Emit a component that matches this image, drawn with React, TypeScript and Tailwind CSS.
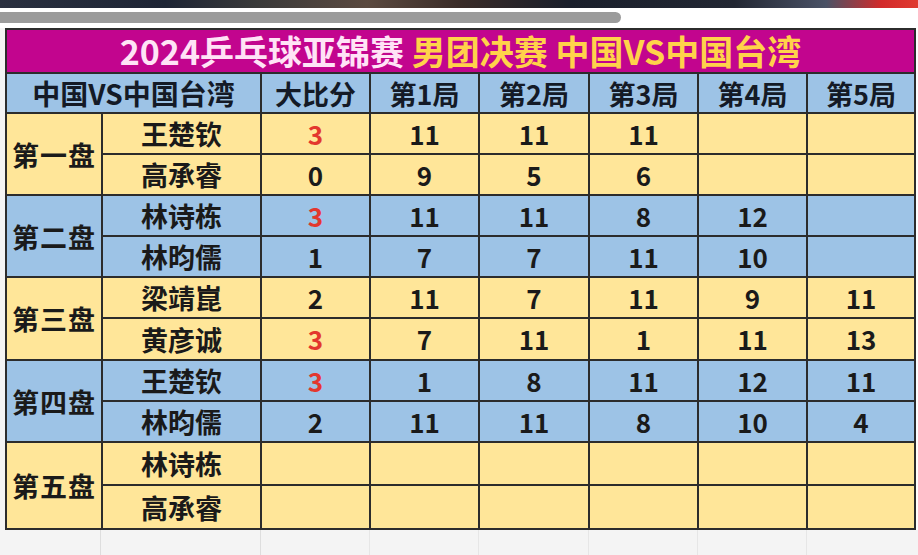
import React from "react";

type Row = { name: string; score: string; games: (number | "")[] };
type Group = { label: string; blue: boolean; rows: Row[] };

const groups: Group[] = [
  {
    label: "第一盘",
    blue: false,
    rows: [
      { name: "王楚钦", score: "3", games: [11, 11, 11, "", ""] },
      { name: "高承睿", score: "0", games: [9, 5, 6, "", ""] },
    ],
  },
  {
    label: "第二盘",
    blue: true,
    rows: [
      { name: "林诗栋", score: "3", games: [11, 11, 8, 12, ""] },
      { name: "林昀儒", score: "1", games: [7, 7, 11, 10, ""] },
    ],
  },
  {
    label: "第三盘",
    blue: false,
    rows: [
      { name: "梁靖崑", score: "2", games: [11, 7, 11, 9, 11] },
      { name: "黄彦诚", score: "3", games: [7, 11, 1, 11, 13] },
    ],
  },
  {
    label: "第四盘",
    blue: true,
    rows: [
      { name: "王楚钦", score: "3", games: [1, 8, 11, 12, 11] },
      { name: "林昀儒", score: "2", games: [11, 11, 8, 10, 4] },
    ],
  },
  {
    label: "第五盘",
    blue: false,
    rows: [
      { name: "林诗栋", score: "", games: ["", "", "", "", ""] },
      { name: "高承睿", score: "", games: ["", "", "", "", ""] },
    ],
  },
];

const font = { fontFamily: '"Noto Sans CJK SC", "Noto Sans", sans-serif' };

export default function App() {
  const headers = ["大比分", "第1局", "第2局", "第3局", "第4局", "第5局"];
  return (
    <div className="w-[918px] h-[555px] overflow-hidden bg-white flex flex-col" style={font}>
      <div className="h-[8px] w-full bg-[linear-gradient(90deg,#2a3040_0%,#1e2535_18%,#3a3a3a_28%,#5b4a40_40%,#3a2c28_50%,#1a1f2b_62%,#222733_80%,#4a5266_90%,#d22a2a_96%,#e03a30_100%)]" />
      <div className="h-[4px] w-full bg-white" />
      <div className="h-[11px] w-[621px] rounded-r-full bg-[#9b9b9b]" />
      <div className="h-[5px] w-full bg-white" />
      <div className="flex">
        <div className="w-[5px] bg-[#f4f4f4]" />
        <div className="grid w-[911px] grid-cols-[94px_157px_107px_107px_108px_107px_107px_106px] grid-rows-[42px_38px_39px_39px_39px_39px_39px_40px_39px_39px_41px_42px] gap-[2px] bg-[#2c2c2c] p-[2px]">
          <div className="col-span-8 flex items-center justify-center bg-[#c2058e] text-[34px] font-bold leading-none">
            <span className="text-[#ffe3f6]">2024乒乓球亚锦赛</span>
            <span className="text-[#ffd24a]">&nbsp;男团决赛&nbsp;中国VS中国台湾</span>
          </div>
          <div className="col-span-2 flex items-center justify-center bg-[#9dc3e6] text-[28px] font-bold leading-none text-[#141a26]">
            中国VS中国台湾
          </div>
          {headers.map((h) => (
            <div key={h} className="flex items-center justify-center bg-[#9dc3e6] text-[27px] font-bold leading-none text-[#141a26]">
              {h}
            </div>
          ))}
          {groups.map((g) => {
            const bg = g.blue ? "bg-[#9dc3e6]" : "bg-[#ffe699]";
            return (
              <React.Fragment key={g.label}>
                <div className={`row-span-2 flex items-center justify-center ${bg} text-[27px] font-bold leading-none tracking-[1px] text-[#1a1a1a]`}>
                  {g.label}
                </div>
                {g.rows.map((r, ri) => (
                  <React.Fragment key={ri}>
                    <div className={`flex items-center justify-center ${bg} text-[27px] font-bold leading-none text-[#1a1a1a]`}>
                      {r.name}
                    </div>
                    <div
                      className={`flex items-center justify-center ${bg} text-[26px] font-bold leading-none ${
                        r.score === "3" ? "text-[#e3372e]" : "text-[#1a1a1a]"
                      }`}
                    >
                      {r.score}
                    </div>
                    {r.games.map((v, gi) => (
                      <div key={gi} className={`flex items-center justify-center ${bg} text-[26px] font-bold leading-none text-[#1a1a1a]`}>
                        {v}
                      </div>
                    ))}
                  </React.Fragment>
                ))}
              </React.Fragment>
            );
          })}
        </div>
        <div className="flex-1 bg-white" />
      </div>
      <div className="flex flex-1 bg-[#f4f4f4]">
        <div className="w-[101px] border-r border-[#dedede]" />
        <div className="w-[160px] border-r border-[#dedede]" />
        <div className="w-[109px] border-r border-[#e6e6e6]" />
        <div className="w-[109px] border-r border-[#e6e6e6]" />
        <div className="w-[110px] border-r border-[#e6e6e6]" />
        <div className="w-[109px] border-r border-[#e6e6e6]" />
        <div className="w-[109px] border-r border-[#e6e6e6]" />
        <div className="flex-1" />
      </div>
    </div>
  );
}
